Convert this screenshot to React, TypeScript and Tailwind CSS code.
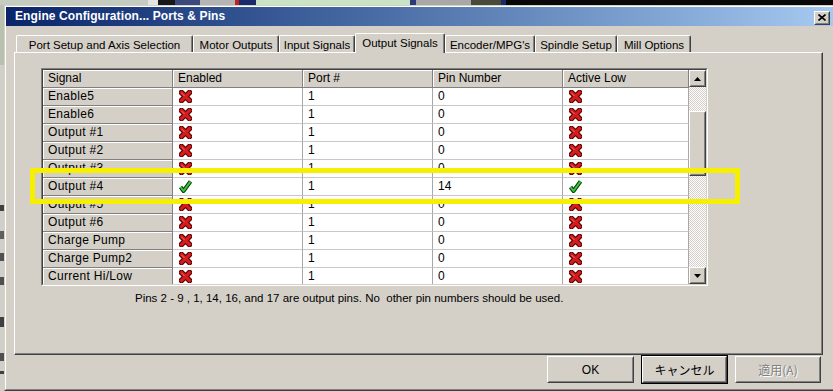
import React from 'react';

type Row = { name: string; enabled: boolean; port: string; pin: string; low: boolean };

const rows: Row[] = [
    { name: 'Enable5', enabled: false, port: '1', pin: '0', low: false },
    { name: 'Enable6', enabled: false, port: '1', pin: '0', low: false },
    { name: 'Output #1', enabled: false, port: '1', pin: '0', low: false },
    { name: 'Output #2', enabled: false, port: '1', pin: '0', low: false },
    { name: 'Output #3', enabled: false, port: '1', pin: '0', low: false },
    { name: 'Output #4', enabled: true, port: '1', pin: '14', low: true },
    { name: 'Output #5', enabled: false, port: '1', pin: '0', low: false },
    { name: 'Output #6', enabled: false, port: '1', pin: '0', low: false },
    { name: 'Charge Pump', enabled: false, port: '1', pin: '0', low: false },
    { name: 'Charge Pump2', enabled: false, port: '1', pin: '0', low: false },
    { name: 'Current Hi/Low', enabled: false, port: '1', pin: '0', low: false },
];

const tabs = [
    { label: 'Port Setup and Axis Selection', w: 'w-[177px]' },
    { label: 'Motor Outputs', w: 'w-[86px]' },
    { label: 'Input Signals', w: 'w-[76px]' },
    { label: 'Output Signals', w: 'w-[90px]', active: true },
    { label: "Encoder/MPG's", w: 'w-[90px]' },
    { label: 'Spindle Setup', w: 'w-[82px]' },
    { label: 'Mill Options', w: 'w-[74px]' },
];

const topStrip = [
    'w-[148px] bg-[#c4ccc0]', 'w-[10px] bg-[#e4e4e4]', 'w-[17px] bg-[#181818]', 'w-[25px] bg-[#3a4a7a]',
    'w-[35px] bg-[#b4b4b4]', 'w-[4px] bg-[#c02020]', 'w-[17px] bg-[#1a2a6a]', 'w-[154px] bg-[#c8e4c4]',
    'w-[6px] bg-[#2a3a7a]', 'w-[55px] bg-[#a8a8a8]', 'w-[30px] bg-[#4a4a3a]', 'w-[5px] bg-[#1a2a6a]', 'flex-1 bg-[#080808]',
];

const Cross = () => (
    <svg width="13" height="13" viewBox="0 0 13 13">
        <path d="M2.5 2.5 L10.5 10.5 M10.5 2.5 L2.5 10.5" stroke="#5a0000" strokeWidth="5.5" strokeLinecap="square" />
        <path d="M2.5 2.5 L10.5 10.5 M10.5 2.5 L2.5 10.5" stroke="#d41c1c" strokeWidth="3.2" strokeLinecap="square" />
        <path d="M2.5 3 L5.5 6" stroke="#f07070" strokeWidth="1" />
    </svg>
);

const Check = () => (
    <svg width="13" height="13" viewBox="0 0 13 13">
        <path d="M1.5 7 L4.5 11 L11.5 1.5" fill="none" stroke="#0a3a0a" strokeWidth="4" strokeLinejoin="round" />
        <path d="M1.5 7 L4.5 11 L11.5 1.5" fill="none" stroke="#3cc83c" strokeWidth="2" strokeLinejoin="round" />
    </svg>
);

const Arrow = ({ up }: { up?: boolean }) => (
    <svg width="7" height="4" viewBox="0 0 7 4">
        <path d={up ? 'M3.5 0 L7 4 L0 4 Z' : 'M0 0 L7 0 L3.5 4 Z'} fill="#000" />
    </svg>
);

const Raised = ({ className, children }: { className: string; children?: React.ReactNode }) => (
    <div className={`border border-t-white border-l-white border-r-[#404040] border-b-[#404040] bg-[#d4d0c8] ${className}`}>
        <div className="w-full h-full border border-t-[#d4d0c8] border-l-[#d4d0c8] border-r-[#808080] border-b-[#808080] flex items-center justify-center">
            {children}
        </div>
    </div>
);

export default function App() {
    return (
        <div className="relative w-[833px] h-[391px] overflow-hidden bg-[#c4ccc0] font-['Liberation_Sans',Arial,sans-serif] text-[12px] text-black">
            <div className="flex h-[5px]">
                {topStrip.map((c, i) => <div key={i} className={c} />)}
            </div>

            <div className="flex h-[386px]">
                <div className="w-[4px] shrink-0 flex flex-col bg-[#d0d0c8]">
                    <div className="h-[60px] bg-[#b8c0b0]" />
                    <div className="h-[6px] bg-[#404040] mt-[140px]" />
                    <div className="h-[8px] bg-[#606060] mt-[20px]" />
                    <div className="h-[8px] bg-[#505050] mt-[14px]" />
                    <div className="h-[8px] bg-[#505050] mt-[16px]" />
                    <div className="h-[10px] bg-[#404040] mt-[32px]" />
                    <div className="h-[8px] bg-[#505050] mt-[26px]" />
                    <div className="h-[3px] bg-[#404040] mt-[10px]" />
                </div>

                <div className="w-[833px] shrink-0 border border-t-[#d4d0c8] border-l-[#d4d0c8] border-r-[#404040] border-b-[#404040]">
                    <div className="h-full border border-t-white border-l-white border-r-[#808080] border-b-[#808080] bg-[#d4d0c8] flex flex-col">
                        <div className="h-[19px] flex items-center bg-gradient-to-r from-[#0a246a] to-[#a6caf0] pl-[9px] pr-[5px]">
                            <span className="flex-1 font-bold text-white text-[12px] leading-[19px] tracking-[0.1px]">Engine Configuration... Ports &amp; Pins</span>
                            <Raised className="w-[16px] h-[14px] mt-[2px]">
                                <svg width="8" height="7" viewBox="0 0 8 7">
                                    <path d="M0.5 0.5 L7.5 6.5 M7.5 0.5 L0.5 6.5" stroke="#000" strokeWidth="1.6" />
                                </svg>
                            </Raised>
                        </div>

                        <div className="pt-[7px] pl-[8px] pr-[12px] flex flex-col">
                            <div className="flex items-end h-[19px] pl-[2px] relative z-10 text-[11.5px]">
                                {tabs.map(t => (
                                    <div
                                        key={t.label}
                                        className={`${t.w} shrink-0 bg-[#d4d0c8] border-l border-t border-l-white border-t-white border-r border-r-[#404040] rounded-t-[2px] shadow-[inset_-1px_0_0_#808080] flex justify-center ${t.active ? 'h-[20px] -mb-[1px] pt-[2px]' : 'h-[17px] pt-[2px]'}`}
                                    >
                                        <span className="leading-[14px] whitespace-nowrap">{t.label}</span>
                                    </div>
                                ))}
                            </div>

                            <div className="h-[303px] border border-t-white border-l-white border-r-[#404040] border-b-[#404040]">
                                <div className="h-full border-r border-b border-r-[#808080] border-b-[#808080] flex flex-col">
                                    <div className="mt-[15px] ml-[26px] w-[667px] border border-t-[#808080] border-l-[#808080] border-r-white border-b-white">
                                        <div className="border border-t-[#404040] border-l-[#404040] border-r-[#d4d0c8] border-b-[#d4d0c8] flex">
                                            <div className="w-[646px] h-[214px] overflow-hidden bg-white">
                                                <div className="flex h-[18px]">
                                                    {['Signal', 'Enabled', 'Port #', 'Pin Number', 'Active Low'].map((h, i) => (
                                                        <div key={h} className={`${i === 4 ? 'w-[126px]' : 'w-[130px]'} bg-[#d4d0c8] border-r border-b border-[#808080] shadow-[inset_1px_1px_0_#ffffff] pl-[5px] leading-[17px]`}>
                                                            {h}
                                                        </div>
                                                    ))}
                                                </div>
                                                {rows.map(r => (
                                                    <div key={r.name} className="flex h-[18px]">
                                                        <div className="w-[130px] bg-[#d4d0c8] border-r border-b border-[#808080] shadow-[inset_1px_1px_0_#ffffff] pl-[5px] leading-[17px] whitespace-nowrap tracking-[0.3px]">
                                                            {r.name}
                                                        </div>
                                                        <div className="w-[130px] border-r border-b border-r-[#a8a8a8] border-b-[#c8c8c8] pl-[6px] flex items-center">
                                                            {r.enabled ? <Check /> : <Cross />}
                                                        </div>
                                                        <div className="w-[130px] border-r border-b border-r-[#a8a8a8] border-b-[#c8c8c8] pl-[5px] leading-[17px]">{r.port}</div>
                                                        <div className="w-[130px] border-r border-b border-r-[#a8a8a8] border-b-[#c8c8c8] pl-[5px] leading-[17px]">{r.pin}</div>
                                                        <div className="w-[126px] border-r border-b border-r-[#a8a8a8] border-b-[#c8c8c8] pl-[6px] flex items-center">
                                                            {r.low ? <Check /> : <Cross />}
                                                        </div>
                                                    </div>
                                                ))}
                                            </div>
                                            <div className="w-[17px] h-[214px] flex flex-col bg-[repeating-conic-gradient(#d4d0c8_0_25%,#ffffff_0_50%)] bg-[length:2px_2px]">
                                                <Raised className="h-[17px] w-[17px]"><Arrow up /></Raised>
                                                <div className="h-[24px]" />
                                                <Raised className="h-[65px] w-[17px]" />
                                                <div className="flex-1" />
                                                <Raised className="h-[17px] w-[17px]"><Arrow /></Raised>
                                            </div>
                                        </div>
                                    </div>

                                    <div className="ml-[120px] mt-[5px] leading-[14px] whitespace-pre text-[11.5px]">Pins 2 - 9 , 1, 14, 16, and 17 are output pins. No  other pin numbers should be used.</div>
                                </div>
                            </div>
                        </div>

                        <div className="flex justify-end gap-[7px] pr-[14px]">
                            <Raised className="w-[87px] h-[27px] mt-[1px]">OK</Raised>
                            <div className="border border-black">
                                <Raised className="w-[85px] h-[27px]">
                                    <span className="font-['Noto_Sans_CJK_JP',sans-serif] text-[12px] leading-[14px]">キャンセル</span>
                                </Raised>
                            </div>
                            <Raised className="w-[86px] h-[27px] mt-[1px]">
                                <span className="font-['Noto_Sans_CJK_JP',sans-serif] text-[12px] leading-[14px] text-[#808080] [text-shadow:1px_1px_0_#ffffff]">適用(A)</span>
                            </Raised>
                        </div>
                    </div>
                </div>
            </div>

            <div className="absolute left-[30px] top-[168px] w-[710px] h-[36px] border-[5px] border-[#f7ef00]" />
        </div>
    );
}
